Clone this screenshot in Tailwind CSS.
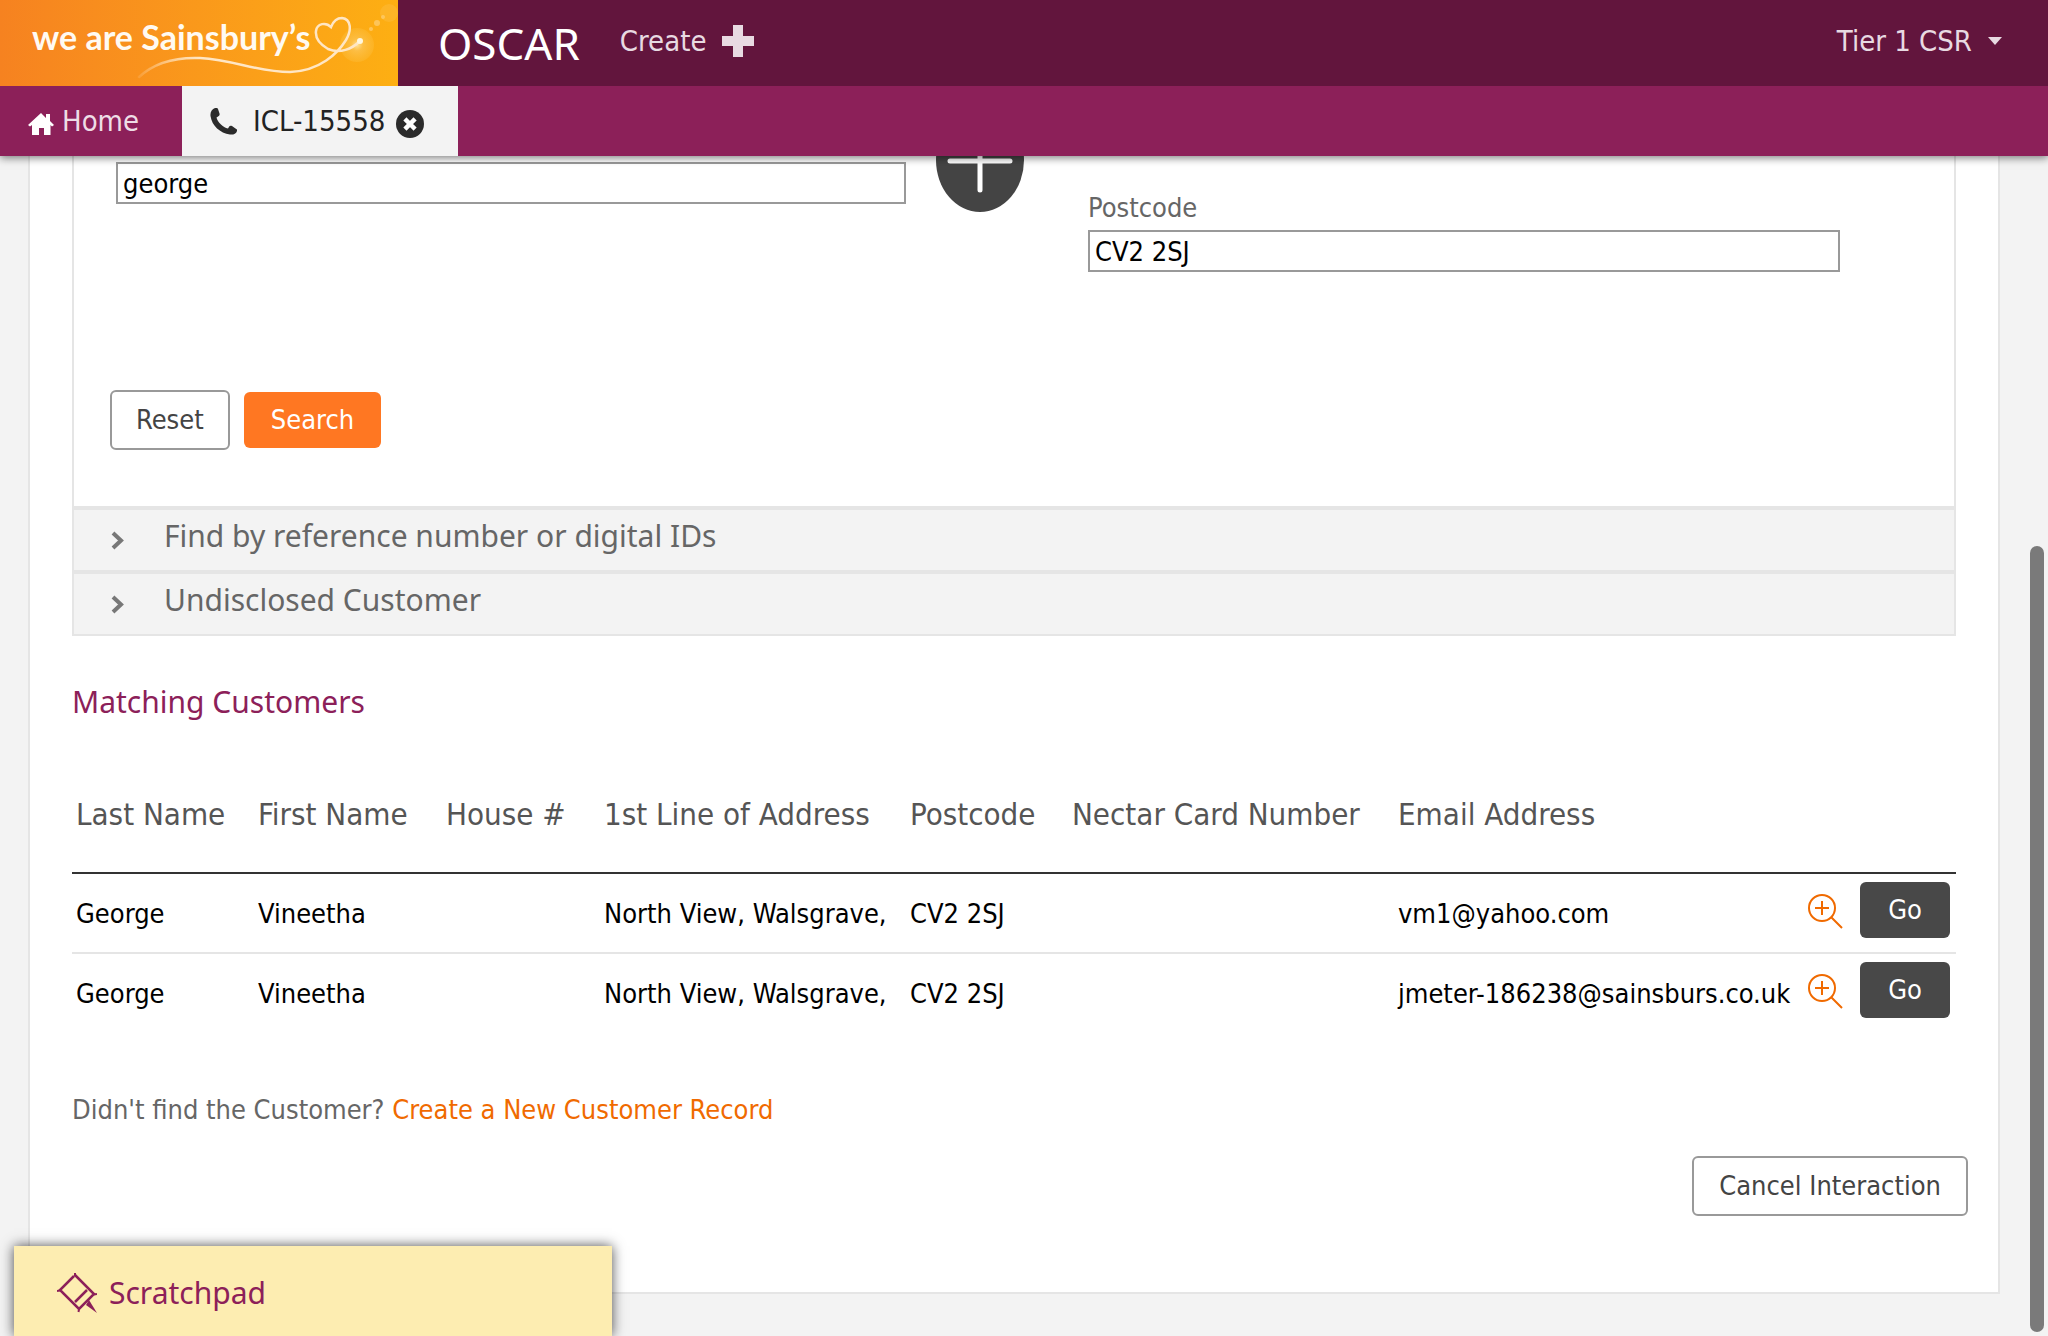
<!DOCTYPE html>
<html lang="en">
<head>
<meta charset="utf-8">
<title>OSCAR</title>
<script src="https://cdn.jsdelivr.net/npm/@tailwindcss/browser@4"></script>
</head>
<body class="flex h-screen flex-col overflow-hidden bg-[#f3f3f3] font-['DejaVu_Sans_Condensed','DejaVu_Sans',sans-serif] text-[27px] leading-9 text-black">

<header class="relative z-10 shrink-0 shadow-[0_2px_8px_rgba(0,0,0,0.5)]">
  <div class="flex h-[86px] items-center bg-[#62153d] text-[29px] text-[#e8dae2]">
    <a href="#" aria-label="we are Sainsbury's" class="relative block h-full w-[398px] shrink-0 bg-linear-to-r from-[#f68220] to-[#fdaf12]">
      <svg class="absolute inset-0" width="398" height="86" viewBox="0 0 398 86" fill="none">
        <defs>
          <radialGradient id="flare"><stop offset="0" stop-color="#ffe9a8" stop-opacity=".9"/><stop offset=".35" stop-color="#fdc658" stop-opacity=".7"/><stop offset="1" stop-color="#fdc040" stop-opacity=".35"/></radialGradient>
          <linearGradient id="swash" gradientUnits="userSpaceOnUse" x1="138" y1="0" x2="200" y2="0"><stop offset="0" stop-color="#fff" stop-opacity=".1"/><stop offset="1" stop-color="#ffe6c4"/></linearGradient>
        </defs>
        <circle cx="357" cy="45" r="17" fill="url(#flare)"/>
        <circle cx="389" cy="13" r="9" fill="#fdbd45" opacity=".4"/>
        <circle cx="377" cy="23" r="3" fill="#fdcb6a" opacity=".8"/>
        <circle cx="371" cy="29" r="2" fill="#fdcb6a" opacity=".8"/>
        <circle cx="383" cy="17" r="2" fill="#fdcb6a" opacity=".8"/>
        <path d="M139 77C155 62 175 57 200 58C235 60 257 72 290 72C320 71 338 53 346 40C352 30 351 19 342 18C336 18 333 22 331 27C326 22 317 23 316 31C315 39 321 45 328 49C340 54 352 49 360 41" stroke="url(#swash)" stroke-width="2.500" stroke-linecap="round"/>
        <circle cx="360" cy="41" r="3" fill="#fff7df"/>
      </svg>
      <span class="relative flex h-[74px] items-center pl-8 font-['Lato',sans-serif] text-[34px] whitespace-nowrap text-[#fffaf2]"><b>we are Sainsbury’s</b></span>
    </a>
    <h1 class="pl-10 font-['Noto_Sans',sans-serif] text-[44px] text-white">OSCAR</h1>
    <button type="button" class="ml-10 flex h-20 items-center gap-4 pb-1">Create
      <svg width="32" height="32" viewBox="0 0 32 32" fill="currentColor"><path d="M11 0h10v11h11v10H21v11H11V21H0V11h11z"/></svg>
    </button>
    <button type="button" class="mr-[46px] ml-auto flex h-20 items-center gap-4 pb-1">Tier 1 CSR
      <svg width="14" height="8" viewBox="0 0 14 8" fill="currentColor"><path d="M0 0h14L7 8z"/></svg>
    </button>
  </div>
  <nav class="flex h-[70px] bg-[#8c2059] text-[29px]">
    <a href="#" class="flex w-[182px] items-center gap-2 pl-7 text-[#eedde6]">
      <svg width="26" height="22" viewBox="0 0 26 22" class="mt-1.5" fill="#fff"><path d="M13 0 18 5V1h4v7l4 4-2 1.500-1.500-1.500V22H16v-7h-5v7H4v-10L2 13.500 0 12z"/></svg>
      Home
    </a>
    <div class="flex w-[276px] items-center bg-[#f3f3f3] pl-7 text-[#222]">
      <svg width="27" height="27" viewBox="0 0 27 27" fill="#2b2b2b"><path d="M5 0C2 1 0 4 .5 8 2 18 10 25 20 26.500c3 .5 6-.5 7-3.500.3-1 0-1.500-.8-2L22 18c-1-.5-2-.5-2.600.3L18 20.500C13 19.500 7.500 14 6.500 9.500L8.800 8c.8-.6 1-1.400.7-2.400L8 1C7.500 0 6.500-.3 5 0z"/></svg>
      <a href="#" class="ml-4">ICL-15558</a>
      <button type="button" aria-label="Close tab" class="mt-1.5 ml-[11px]">
        <svg class="block" width="28" height="28" viewBox="0 0 28 28"><circle cx="14" cy="14" r="14" fill="#2b2b2b"/><path d="M10.500 10.500l7 7M17.500 10.500l-7 7" stroke="#fff" stroke-width="4.500" stroke-linecap="square"/></svg>
      </button>
    </div>
  </nav>
</header>

<main class="relative flex-1 overflow-hidden">
  <div class="-mt-12 mr-12 ml-7 border-x-2 border-b-2 border-[#e5e5e5] bg-white px-[42px] pb-[76px]">
    <section class="border-x-2 border-b-2 border-[#e5e5e5]">
      <form class="pb-14">
        <div class="flex items-start pr-[114px] pl-[42px]">
          <div class="min-w-0 flex-[790_1_0%] pt-[54px]">
            <input type="text" aria-label="Last name" value="george" class="block h-[42px] w-full border-2 border-[#999] bg-white px-[5px]">
          </div>
          <button type="button" aria-label="Add" class="ml-[30px] flex h-[104px] w-[88px] items-center justify-center rounded-[50%] bg-[#444]">
            <svg width="66" height="66" viewBox="0 0 66 66" stroke="#fff" stroke-width="5" stroke-linecap="round"><path d="M3 34h60M33 3v60"/></svg>
          </button>
          <div class="ml-16 flex min-w-0 flex-[752_1_0%] flex-col gap-1 pt-[82px]">
            <label for="postcode" class="text-[#666]">Postcode</label>
            <input id="postcode" type="text" value="CV2 2SJ" class="h-[42px] w-full border-2 border-[#999] bg-white px-[5px]">
          </div>
        </div>
        <div class="mt-[118px] flex items-center gap-[14px] pl-9">
          <button type="reset" class="h-[60px] rounded-md border-2 border-[#999] bg-white px-6 text-[#444]">Reset</button>
          <button type="button" class="h-14 rounded-md bg-[#ff7722] px-[27px] text-white">Search</button>
        </div>
      </form>
      <button type="button" class="flex h-16 w-full items-center gap-[39px] border-t-4 border-[#e5e5e5] bg-[#f3f3f3] pl-[37px] text-left font-['Noto_Sans',sans-serif] text-[30px] text-[#666]">
        <svg width="14" height="19" viewBox="0 0 14 19" fill="none" stroke="#777" stroke-width="4"><path d="M2 2l8 7.500L2 17"/></svg>
        <span class="pb-2">Find by reference number or digital IDs</span>
      </button>
      <button type="button" class="flex h-16 w-full items-center gap-[39px] border-t-4 border-[#e5e5e5] bg-[#f3f3f3] pl-[37px] text-left font-['Noto_Sans',sans-serif] text-[30px] text-[#666]">
        <svg width="14" height="19" viewBox="0 0 14 19" fill="none" stroke="#777" stroke-width="4"><path d="M2 2l8 7.500L2 17"/></svg>
        <span class="pb-2">Undisclosed Customer</span>
      </button>
    </section>

    <h2 class="mt-[46px] font-['Noto_Sans',sans-serif] text-[30px] leading-10 text-[#8c2059]">Matching Customers</h2>

    <table class="mt-8 w-full table-fixed border-separate border-spacing-0 text-left whitespace-nowrap">
      <colgroup>
        <col class="w-[182px]"><col class="w-[188px]"><col class="w-[158px]"><col class="w-[306px]"><col class="w-[162px]"><col class="w-[326px]"><col class="w-[410px]"><col class="w-[52px]"><col class="w-[100px]">
      </colgroup>
      <thead>
        <tr class="h-[120px] text-[31px] text-[#555] *:border-b-2 *:border-[#333] *:pt-0.5 *:pl-1 *:font-normal">
          <th>Last Name</th><th>First Name</th><th>House #</th><th>1st Line of Address</th><th>Postcode</th><th>Nectar Card Number</th><th>Email Address</th><th></th><th></th>
        </tr>
      </thead>
      <tbody>
        <tr class="h-20 *:border-b-2 *:border-[#e5e5e5] *:pt-0.5 *:pl-1">
          <td>George</td><td>Vineetha</td><td></td><td>North View, Walsgrave,</td><td>CV2 2SJ</td><td></td><td>vm1@yahoo.com</td>
          <td class="pb-1.5"><button type="button" aria-label="View details" class="block"><svg class="block" width="35" height="35" viewBox="0 0 35 35" fill="none" stroke="#f06a00" stroke-width="2"><circle cx="14" cy="14" r="13"/><path d="M7 14h14M14 7v14M23 23l11 11"/></svg></button></td>
          <td class="pb-2"><button type="button" class="block h-14 w-[90px] rounded-md bg-[#484848] text-white">Go</button></td>
        </tr>
        <tr class="h-20 *:border-b-2 *:border-transparent *:pt-0.5 *:pl-1">
          <td>George</td><td>Vineetha</td><td></td><td>North View, Walsgrave,</td><td>CV2 2SJ</td><td></td><td>jmeter-186238@sainsburs.co.uk</td>
          <td class="pb-1.5"><button type="button" aria-label="View details" class="block"><svg class="block" width="35" height="35" viewBox="0 0 35 35" fill="none" stroke="#f06a00" stroke-width="2"><circle cx="14" cy="14" r="13"/><path d="M7 14h14M14 7v14M23 23l11 11"/></svg></button></td>
          <td class="pb-2"><button type="button" class="block h-14 w-[90px] rounded-md bg-[#484848] text-white">Go</button></td>
        </tr>
      </tbody>
    </table>

    <p class="mt-[58px] text-[#666]">Didn't find the Customer? <a href="#" class="text-[#f06a00]">Create a New Customer Record</a></p>
    <div class="-mr-3 mt-7 flex justify-end">
      <button type="button" class="h-[60px] rounded-md border-2 border-[#999] bg-white px-[25px] text-[#444]">Cancel Interaction</button>
    </div>
  </div>

  <div class="absolute right-1 bottom-1 h-[786px] w-[14px] rounded-full bg-[#7a7a7a]"></div>

  <button type="button" class="absolute bottom-0 left-[14px] flex h-[90px] w-[598px] items-center gap-3 bg-[#fdedb1] pt-1 pl-[43px] font-['Noto_Sans',sans-serif] text-[30px] text-[#8c2059] shadow-[0_0_12px_rgba(0,0,0,0.7)]">
    <svg width="40" height="40" viewBox="0 0 40 40" fill="none" stroke="currentColor" stroke-width="2.500"><path d="M17 3 3 17 22 36 37 21 18 2M30 17 18 29"/><path d="M22 36l-.5 3M3 17.500l-3 .5M37 21.500l3-.5M18 3V0" stroke-width="2"/><path d="M32 27l8 13-11-8z" fill="currentColor" stroke="none"/></svg>
    Scratchpad
  </button>
</main>
</body>
</html>
